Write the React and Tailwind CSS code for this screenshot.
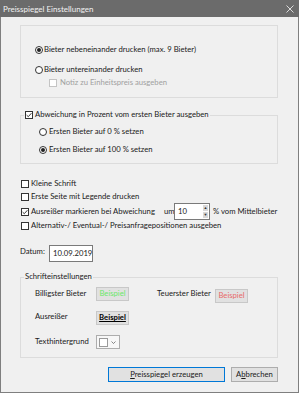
import React from 'react';

const font = { fontFamily: 'Lato, "Liberation Sans", sans-serif' };

// Windows style radio button
const Radio = ({ checked }) => (
  <span className="w-[8px] h-[8px] rounded-full border border-[#333] bg-white flex items-center justify-center shrink-0">
    {checked && <span className="w-[4px] h-[4px] rounded-full bg-[#222]" />}
  </span>
);

// Windows style checkbox
const Check = ({ checked, disabled }) => (
  <span
    className={`w-[8px] h-[8px] border bg-white flex items-center justify-center shrink-0 ${
      disabled ? 'border-[#c4c4c4]' : 'border-[#333]'
    }`}
  >
    {checked && (
      <svg width="6" height="6" viewBox="0 0 6 6">
        <path d="M0.6 3.1 L2.3 4.7 L5.4 1.2" fill="none" stroke="#222" strokeWidth="0.9" />
      </svg>
    )}
  </span>
);

const Swatch = ({ className, children }) => (
  <span className={`w-[33px] h-[14px] bg-[#e1e1e1] border border-[#c8c8c8] flex items-center justify-center ${className}`}>
    {children}
  </span>
);

export default function App() {
  return (
    <div
      style={font}
      className="w-[299px] h-[393px] bg-[#f0f0f0] border-x border-b border-[#7f7f7f] flex flex-col text-[7.7px] text-[#1a1a1a] leading-none whitespace-nowrap"
    >
      {/* Title bar */}
      <div className="h-[17px] bg-[#6b6b6b] flex items-center justify-between pl-[3px] pr-[5px] text-[#f2f2f2] -mx-px">
        <span className="text-[8px]">Preisspiegel Einstellungen</span>
        <svg width="8" height="8" viewBox="0 0 8 8">
          <path d="M0.5 0.5 L7.5 7.5 M7.5 0.5 L0.5 7.5" stroke="#e8e8e8" strokeWidth="0.9" />
        </svg>
      </div>

      <div className="pl-[19px] pr-[20px] flex flex-col">
        {/* Group 1 */}
        <div className="mt-[8px] h-[73px] border border-[#dcdcdc] pt-[18px] pl-[14px] flex flex-col">
          <div className="h-[12px] flex items-center gap-[1px]">
            <Radio checked />
            <span>Bieter nebeneinander drucken (max. 9 Bieter)</span>
          </div>
          <div className="h-[12px] mt-[8px] flex items-center gap-[1px]">
            <Radio />
            <span>Bieter untereinander drucken</span>
          </div>
          <div className="h-[12px] mt-[1px] ml-[14px] flex items-center gap-[3px] text-[#a0a0a0]">
            <Check disabled />
            <span>Notiz zu Einheitspreis ausgeben</span>
          </div>
        </div>

        {/* Group 2 */}
        <fieldset className="mt-[11px] border border-[#dcdcdc] px-[3px] pb-[7px]">
          <legend className="px-[1px] h-[12px] flex items-center gap-[2px]">
            <Check checked />
            <span>Abweichung in Prozent vom ersten Bieter ausgeben</span>
          </legend>
          <div className="pl-[15px] flex flex-col">
            <div className="h-[12px] mt-[5px] flex items-center gap-[2px]">
              <Radio />
              <span>Ersten Bieter auf 0 % setzen</span>
            </div>
            <div className="h-[12px] mt-[6px] flex items-center gap-[2px]">
              <Radio checked />
              <span>Ersten Bieter auf 100 % setzen</span>
            </div>
          </div>
        </fieldset>

        {/* Options */}
        <div className="mt-[13px] pl-[1px] flex flex-col">
          <div className="h-[13px] flex items-center gap-[2px]">
            <Check />
            <span>Kleine Schrift</span>
          </div>
          <div className="h-[13px] flex items-center gap-[2px]">
            <Check />
            <span>Erste Seite mit Legende drucken</span>
          </div>
          <div className="h-[17px] flex items-center">
            <Check checked />
            <span className="ml-[2px] w-[133px]">Ausreißer markieren bei Abweichung</span>
            <span className="w-[10px]">um</span>
            <div className="h-[17px] w-[36px] bg-white border border-[#7a7a7a] flex items-center justify-between pl-[3px] pr-[1px]">
              <span>10</span>
              <span className="flex flex-col gap-[1px]">
                <span className="w-[5px] h-[6px] bg-[#d8d8d8] flex items-center justify-center text-[4px] text-[#333]">▲</span>
                <span className="w-[5px] h-[6px] bg-[#d8d8d8] flex items-center justify-center text-[4px] text-[#333]">▼</span>
              </span>
            </div>
            <span className="ml-[3px]">% vom Mittelbieter</span>
          </div>
          <div className="h-[12px] flex items-center gap-[2px]">
            <Check />
            <span>Alternativ-/ Eventual-/ Preisanfragepositionen ausgeben</span>
          </div>
        </div>

        {/* Datum */}
        <div className="mt-[13px] h-[17px] flex items-center">
          <span className="w-[29px] -mt-[4px]">Datum:</span>
          <div className="h-[17px] w-[44px] bg-white border border-[#7a7a7a] flex items-center pl-[3px]">
            10.09.2019
          </div>
        </div>

        {/* Group 3 */}
        <fieldset className="mt-[9px] border border-[#dcdcdc] px-[3px] pb-[8px]">
          <legend className="px-[1px] h-[12px] flex items-center">Schrifteinstellungen</legend>
          <div className="pl-[11px] flex flex-col">
            <div className="mt-[4px] flex items-start">
              <span className="w-[61px] h-[14px] flex items-center">Billigster Bieter</span>
              <Swatch className="text-[#6be86b]">Beispiel</Swatch>
              <span className="ml-[28px] w-[58px] h-[14px] flex items-center">Teuerster Bieter</span>
              <Swatch className="mt-[2px] text-[#e86a6a]">Beispiel</Swatch>
            </div>
            <div className="mt-[8px] flex items-center">
              <span className="w-[61px] -mt-[2px]">Ausreißer</span>
              <Swatch className="text-black font-bold underline">Beispiel</Swatch>
            </div>
            <div className="mt-[10px] flex items-center">
              <span className="w-[61px]">Texthintergrund</span>
              <div className="w-[24px] h-[14px] bg-[#f7f7f7] border border-[#adadad] flex items-center pl-[2px] gap-[3px]">
                <span className="w-[9px] h-[9px] bg-white border border-[#9a9a9a]" />
                <svg width="5" height="3" viewBox="0 0 5 3">
                  <path d="M0.5 0.5 L2.5 2.5 L4.5 0.5" fill="none" stroke="#555" strokeWidth="0.7" />
                </svg>
              </div>
            </div>
          </div>
        </fieldset>

        {/* Buttons */}
        <div className="mt-[9px] flex justify-end gap-[6px]">
          <button className="w-[117px] h-[15px] bg-[#e1e1e1] border border-[#0078d7] text-[7.7px] text-[#1a1a1a] flex items-center justify-center">
            <span><span className="underline">P</span>reisspiegel erzeugen</span>
          </button>
          <button className="w-[47px] h-[15px] bg-[#e1e1e1] border border-[#adadad] text-[7.7px] text-[#1a1a1a] flex items-center justify-center">
            <span>A<span className="underline">b</span>brechen</span>
          </button>
        </div>
      </div>
    </div>
  );
}
